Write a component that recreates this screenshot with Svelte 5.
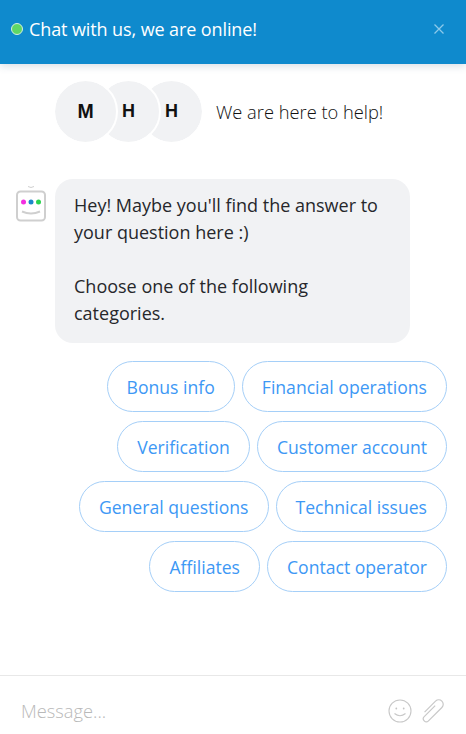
<script>
  const agents = ['M', 'H', 'H'];
  const categories = [
    'Bonus info',
    'Financial operations',
    'Verification',
    'Customer account',
    'General questions',
    'Technical issues',
    'Affiliates',
    'Contact operator'
  ];
</script>

<div class="chat">
  <header class="top">
    <span class="dot"></span>
    <span class="title">Chat with us, we are online!</span>
    <button class="close" aria-label="Close">
      <svg width="10" height="10" viewBox="0 0 10 10"><path d="M0.5 0.5 9.5 9.5M9.5 0.5 0.5 9.5" stroke="currentColor" stroke-width="1.3" fill="none" /></svg>
    </button>
  </header>

  <main class="body">
    <div class="team">
      <div class="avatars">
        {#each agents as a}
          <span class="avatar">{a}</span>
        {/each}
      </div>
      <span class="help">We are here to help!</span>
    </div>

    <div class="msg">
      <svg class="bot" width="32" height="38" viewBox="0 0 32 38">
        <path d="M13 1.5q3 2 6 0" stroke="#d0d0d0" stroke-width="1" fill="none" />
        <rect x="2" y="6.5" width="28" height="29" rx="3.5" fill="#fff" stroke="#cfcfcf" stroke-width="2" />
        <circle cx="8.5" cy="17" r="2.5" fill="#f32ee0" />
        <circle cx="16" cy="17" r="2.5" fill="#1c87c9" />
        <circle cx="23.5" cy="17" r="2.5" fill="#2bd34f" />
        <path d="M7 26.5q9 4 18 0" stroke="#cfcfcf" stroke-width="2" fill="none" />
      </svg>
      <div class="bubble">
        <p>Hey! Maybe you'll find the answer to your question here :)</p>
        <p>Choose one of the following categories.</p>
      </div>
    </div>

    <div class="options">
      {#each categories as c}
        <button class="opt">{c}</button>
      {/each}
    </div>
  </main>

  <footer class="composer">
    <span class="placeholder">Message...</span>
    <svg class="ico" width="24" height="24" viewBox="0 0 24 24" fill="none" stroke="#c8c8c8" stroke-width="1.1">
      <circle cx="12" cy="12" r="11" />
      <circle cx="8.3" cy="9.5" r="0.9" fill="#c4c4c4" stroke="none" />
      <circle cx="15.7" cy="9.5" r="0.9" fill="#c4c4c4" stroke="none" />
      <path d="M6.5 14.5q5.5 4.5 11 0" />
    </svg>
    <svg class="ico" width="24" height="24" viewBox="0 0 24 24" fill="none" stroke="#c8c8c8" stroke-width="1.2">
      <path transform="rotate(45 12 12)" d="M10.5 6V21.5a3 3 0 0 0 6 0V2.5a4.5 4.5 0 0 0-9 0V18" />
    </svg>
  </footer>
</div>

<style>
  :global(body) {
    margin: 0;
    background: #fff;
  }
  .chat {
    width: 466px;
    height: 734px;
    display: flex;
    flex-direction: column;
    font-family: 'Open Sans', sans-serif;
    color: #26272b;
  }
  .top {
    flex: 0 0 64px;
    display: flex;
    align-items: center;
    padding: 0 22px 6px 11px;
    background: #0f8acd;
    color: #fff;
    box-shadow: 0 2px 8px rgba(60, 90, 120, 0.2);
    box-sizing: border-box;
  }
  .dot {
    width: 10px;
    height: 10px;
    border-radius: 50%;
    background: #5fd765;
    border: 1px solid #d5efe0;
    margin-right: 6px;
  }
  .title {
    flex: 1;
    font-size: 18px;
    letter-spacing: -0.1px;
  }
  .close {
    display: flex;
    padding: 0;
    border: none;
    background: none;
    color: #8cc9ea;
  }
  .body {
    flex: 1;
    padding: 17px 19px 0 16px;
  }
  .team {
    display: flex;
    align-items: center;
    padding-left: 39px;
  }
  .avatars {
    display: flex;
    margin-right: 14px;
  }
  .avatar {
    width: 61px;
    height: 61px;
    margin-left: -18px;
    border-radius: 50%;
    background: #f1f2f4;
    display: grid;
    place-items: center;
    font: bold 18px 'Liberation Sans', sans-serif;
    color: #111;
    outline: 2px solid #fff;
  }
  .avatar:first-child {
    margin-left: 0;
    z-index: 3;
    font-size: 19.5px;
  }
  .avatar:nth-child(2) {
    z-index: 2;
  }
  .help {
    font-size: 18.3px;
    font-weight: 300;
    color: #111;
  }
  .msg {
    display: flex;
    margin-top: 37px;
    align-items: flex-start;
  }
  .bot {
    flex: none;
    margin: 6px 8px 0 -1px;
  }
  .bubble {
    width: 355px;
    box-sizing: border-box;
    padding: 13px 19px 16px;
    border-radius: 18px;
    background: #f1f2f4;
    font-size: 18px;
    line-height: 27px;
  }
  .bubble p {
    margin: 0 0 27px;
  }
  .bubble p:last-child {
    margin: 0;
  }
  .options {
    display: flex;
    flex-wrap: wrap;
    justify-content: flex-end;
    gap: 9px 7px;
    margin-top: 18px;
    padding-left: 50px;
  }
  .opt {
    height: 51px;
    padding: 0 19px;
    border: 1px solid #a5cff8;
    border-radius: 26px;
    background: #fff;
    color: #3d98f5;
    font: inherit;
    font-size: 17.6px;
  }
  .composer {
    flex: 0 0 59px;
    display: flex;
    align-items: center;
    gap: 8px;
    padding: 11px 22px 0 21px;
    border-top: 1px solid #e8e8e8;
    box-sizing: border-box;
  }
  .placeholder {
    flex: 1;
    color: #b9b9b9;
    font-size: 18.3px;
    font-weight: 300;
  }
</style>
